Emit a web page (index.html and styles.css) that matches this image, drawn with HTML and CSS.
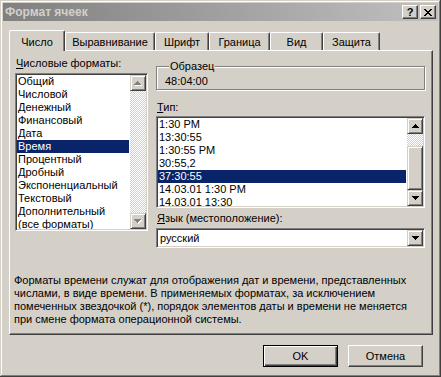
FILE: index.html
```html
<!DOCTYPE html>
<html lang="ru">
<head>
    <meta charset="UTF-8">
    <title>Формат ячеек</title>
    <link rel="stylesheet" href="styles.css">
</head>
<body>
    <div class="window">
        <div class="titlebar">
            <span class="title">Формат ячеек</span>
            <div class="caption-buttons">
                <span class="cap-btn help">?</span>
                <span class="cap-btn close">
                    <svg width="8" height="7" viewBox="0 0 8 7"><path d="M0 0h2v1H0zM6 0h2v1H6zM1 1h2v1H1zM5 1h2v1H5zM2 2h4v1H2zM3 3h2v1H3zM2 4h4v1H2zM1 5h2v1H1zM5 5h2v1H5zM0 6h2v1H0zM6 6h2v1H6z"/></svg>
                </span>
            </div>
        </div>

        <div class="dialog">
            <div class="tabs">
                <div class="tab tab-number active">Число</div>
                <div class="tab tab-align">Выравнивание</div>
                <div class="tab tab-font">Шрифт</div>
                <div class="tab tab-border">Граница</div>
                <div class="tab tab-view">Вид</div>
                <div class="tab tab-protect">Защита</div>
            </div>

            <div class="panel">
                <div class="panel-body">
                    <div class="col-left">
                        <div class="label"><u>Ч</u>исловые форматы:</div>
                        <div class="listbox formats">
                            <ul class="items">
                                <li>Общий</li>
                                <li>Числовой</li>
                                <li>Денежный</li>
                                <li>Финансовый</li>
                                <li>Дата</li>
                                <li class="selected">Время</li>
                                <li>Процентный</li>
                                <li>Дробный</li>
                                <li>Экспоненциальный</li>
                                <li>Текстовый</li>
                                <li>Дополнительный</li>
                                <li>(все форматы)</li>
                            </ul>
                            <div class="scrollbar disabled">
                                <div class="sb-btn">
                                    <svg width="8" height="5" viewBox="0 0 8 5"><path class="shade" d="M4 1h1v1h1v1h1v1h1v1H1V4h1V3h1V2h1z"/><path d="M3 0h1v1h1v1h1v1h1v1H0V3h1V2h1V1h1z"/></svg>
                                </div>
                                <div class="sb-track"></div>
                                <div class="sb-btn">
                                    <svg width="8" height="5" viewBox="0 0 8 5"><path class="shade" d="M1 1h7v1H7v1H6v1H5v1H4V4H3V3H2V2H1z"/><path d="M0 0h7v1H6v1H5v1H4v1H3V3H2V2H1V1H0z"/></svg>
                                </div>
                            </div>
                        </div>
                    </div>

                    <div class="col-right">
                        <fieldset class="sample">
                            <legend>Образец</legend>
                            <div class="sample-value">48:04:00</div>
                        </fieldset>

                        <div class="label type-label"><u>Т</u>ип:</div>
                        <div class="listbox types">
                            <ul class="items">
                                <li>1:30 PM</li>
                                <li>13:30:55</li>
                                <li>1:30:55 PM</li>
                                <li>30:55,2</li>
                                <li class="selected">37:30:55</li>
                                <li>14.03.01 1:30 PM</li>
                                <li>14.03.01 13:30</li>
                            </ul>
                            <div class="scrollbar">
                                <div class="sb-btn">
                                    <svg width="7" height="4" viewBox="0 0 7 4"><path d="M3 0h1v1h1v1h1v1h1v1H0V3h1V2h1V1h1z"/></svg>
                                </div>
                                <div class="sb-track"></div>
                                <div class="sb-thumb"></div>
                                <div class="sb-btn">
                                    <svg width="7" height="4" viewBox="0 0 7 4"><path d="M0 0h7v1H6v1H5v1H4v1H3V3H2V2H1V1H0z"/></svg>
                                </div>
                            </div>
                        </div>

                        <div class="label lang-label"><u>Я</u>зык (местоположение):</div>
                        <div class="combo">
                            <span class="combo-value">русский</span>
                            <div class="sb-btn combo-btn">
                                <svg width="7" height="4" viewBox="0 0 7 4"><path d="M0 0h7v1H6v1H5v1H4v1H3V3H2V2H1V1H0z"/></svg>
                            </div>
                        </div>
                    </div>
                </div>

                <p class="description">Форматы времени служат для отображения дат и времени, представленных<br>числами, в виде времени. В применяемых форматах, за исключением<br>помеченных звездочкой (*), порядок элементов даты и времени не меняется<br>при смене формата операционной системы.</p>
            </div>

            <div class="buttons">
                <button class="btn default">OK</button>
                <button class="btn">Отмена</button>
            </div>
        </div>
    </div>
</body>
</html>
```

FILE: styles.css
```css
* {
    box-sizing: border-box;
}
body, html {
    margin: 0;
    padding: 0;
    background-color: #d4d0c8;
    font-family: "Liberation Sans", Arial, sans-serif;
    font-size: 11px;
    color: #000;
}
.window {
    width: 441px;
    height: 377px;
    padding: 3px;
    background-color: #d4d0c8;
    box-shadow: inset -1px -1px #404040, inset 1px 1px #d4d0c8, inset -2px -2px #808080, inset 2px 2px #fff;
}

/* title bar */
.titlebar {
    height: 18px;
    display: flex;
    align-items: center;
    justify-content: space-between;
    padding: 0 2px 0 2px;
    background: linear-gradient(to right, #808080, #c0c0c0);
}
.title {
    font-weight: bold;
    font-size: 12px;
    color: #d4d0c8;
}
.caption-buttons {
    display: flex;
    gap: 2px;
}
.cap-btn {
    width: 16px;
    height: 14px;
    display: flex;
    align-items: center;
    justify-content: center;
    background-color: #d4d0c8;
    border: 1px solid;
    border-color: #fff #404040 #404040 #fff;
    box-shadow: inset -1px -1px #808080;
    font-weight: bold;
    font-size: 11px;
    line-height: 12px;
}

/* tabs */
.dialog {
    padding: 9px 0 0 6px;
}
.tabs {
    display: flex;
    align-items: flex-end;
    height: 20px;
}
.tab {
    height: 18px;
    padding-top: 3px;
    text-align: center;
    line-height: 13px;
    border: 1px solid;
    border-bottom: none;
    border-color: #fff #404040 #fff #fff;
    border-radius: 2px 2px 0 0;
    box-shadow: inset -1px 0 #808080;
    background-color: #d4d0c8;
}
.tab.active {
    height: 21px;
    padding-top: 5px;
    margin-bottom: -1px;
    position: relative;
    z-index: 1;
}
.tab-number { width: 56px; }
.tab-align { width: 90px; }
.tab-font { width: 54px; }
.tab-border { width: 61px; }
.tab-view { width: 53px; }
.tab-protect { width: 57px; }

/* panel */
.panel {
    width: 424px;
    height: 285px;
    padding: 6px 5px 0 5px;
    border: 1px solid;
    border-color: #fff #404040 #404040 #fff;
    box-shadow: inset -1px -1px #808080;
}
.panel-body {
    display: flex;
    gap: 8px;
}
.col-left {
    width: 133px;
}
.col-right {
    width: 269px;
}
.label {
    line-height: 13px;
    height: 13px;
    padding-left: 1px;
    margin-bottom: 3px;
}

/* list boxes */
.listbox {
    display: flex;
    background-color: #fff;
    border: 1px solid;
    border-color: #808080 #fff #fff #808080;
    box-shadow: inset 1px 1px #404040, inset -1px -1px #d4d0c8;
    padding: 1px;
}
.formats {
    height: 158px;
}
.types {
    height: 92px;
}
.items {
    flex: 1;
    list-style: none;
    margin: 0;
    padding: 0 1px 0 0;
    overflow: hidden;
}
.items li {
    height: 13px;
    line-height: 13px;
    padding-left: 1px;
    white-space: nowrap;
}
.types .items li {
    line-height: 12px;
}
.items li.selected {
    background-color: #0a246a;
    color: #fff;
}

/* scrollbars */
.scrollbar {
    width: 16px;
    display: flex;
    flex-direction: column;
}
.sb-btn, .sb-thumb {
    width: 16px;
    height: 16px;
    display: flex;
    align-items: center;
    justify-content: center;
    background-color: #d4d0c8;
    border: 1px solid;
    border-color: #d4d0c8 #404040 #404040 #d4d0c8;
    box-shadow: inset 1px 1px #fff, inset -1px -1px #808080;
}
.sb-btn svg {
    display: block;
    fill: #000;
}
.disabled .sb-btn svg {
    fill: #808080;
}
.disabled .sb-btn svg .shade {
    fill: #fff;
}
.sb-track {
    flex: 1;
    background: repeating-conic-gradient(#fff 0% 25%, #d4d0c8 0% 50%) 0 0 / 2px 2px;
}
.sb-thumb {
    height: 44px;
}

/* sample group */
.sample {
    margin: 3px 0 0 0;
    padding: 0 0 0 8px;
    height: 30px;
    border: 1px solid #808080;
    box-shadow: inset 1px 1px #fff, 1px 1px #fff;
}
.sample legend {
    padding: 0 1px;
    margin-left: 4px;
    line-height: 13px;
    background-color: #d4d0c8;
}
.sample-value {
    line-height: 13px;
    padding-top: 2px;
}
.type-label {
    margin-top: 11px;
    margin-bottom: 2px;
}
.lang-label {
    margin-top: 4px;
}

/* combo */
.combo {
    height: 20px;
    display: flex;
    align-items: center;
    justify-content: space-between;
    background-color: #fff;
    border: 1px solid;
    border-color: #808080 #fff #fff #808080;
    box-shadow: inset 1px 1px #404040, inset -1px -1px #d4d0c8;
    padding: 1px;
}
.combo-value {
    padding-left: 2px;
}
.combo-btn {
    height: 16px;
}

.description {
    margin: 26px 0 0 -1px;
    line-height: 13px;
    white-space: nowrap;
}

/* dialog buttons */
.buttons {
    display: flex;
    justify-content: flex-end;
    gap: 10px;
    margin-top: 10px;
    padding-right: 15px;
}
.btn {
    width: 75px;
    height: 22px;
    font-family: inherit;
    font-size: 11px;
    color: #000;
    background-color: #d4d0c8;
    border: 1px solid;
    border-color: #fff #404040 #404040 #fff;
    box-shadow: inset -1px -1px #808080;
    padding: 0;
}
.btn.default {
    border-color: #000;
    box-shadow: inset 1px 1px #fff, inset -1px -1px #404040, inset -2px -2px #808080;
}
```
